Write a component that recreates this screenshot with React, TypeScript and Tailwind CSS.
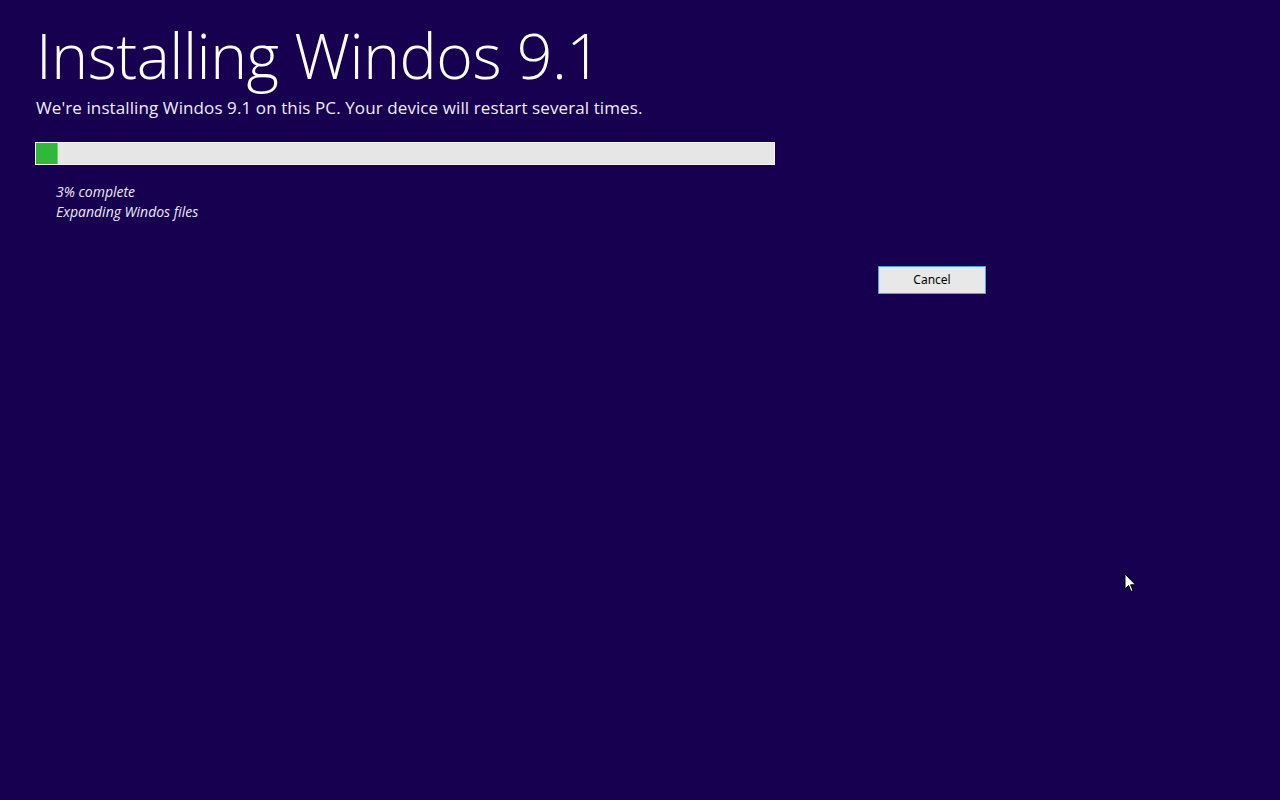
export default function App() {
  return (
    <div className="relative w-[1280px] h-[800px] overflow-hidden bg-[#180050] text-white" style={{ fontFamily: '"Open Sans", "Noto Sans", sans-serif' }}>
      <div className="pl-[36px] pt-[20px]">
        <h1 className="text-[62.5px] font-light leading-[70px] tracking-[-0.5px]">Installing Windos 9.1</h1>
        <p className="text-[17px] leading-[24px] mt-[6px] tracking-[0.1px] text-[#f0eef8]">We're installing Windos 9.1 on this PC. Your device will restart several times.</p>
        <div className="mt-[22px] w-[740px] h-[23px] ml-[-1px] bg-[#e6e6e6] border border-[#f4f4f4] flex">
          <div className="w-[22px] h-full bg-[#2fb83a] border-r border-[#6fd46e]" />
        </div>
        <div className="mt-[17px] pl-[20px] italic text-[14px] leading-[20px] text-[#ecebf5]">
          <div>3% complete</div>
          <div>Expanding Windos files</div>
        </div>
        <div className="mt-[44px] pl-[842px]">
          <button className="w-[108px] h-[28px] bg-[#e8e8e8] border border-[#4aa4f0] text-black text-[12px] leading-none" style={{ fontFamily: '"Noto Sans", sans-serif' }}>
            Cancel
          </button>
        </div>
      </div>
      <svg className="absolute left-[1124px] top-[573px]" width="14" height="20" viewBox="0 0 14 20">
        <path d="M1 1 L1 16 L4.5 12.5 L7 18.5 L9 17.6 L6.6 11.8 L11.5 11.8 Z" fill="#ffffff" stroke="#000000" strokeWidth="1" />
      </svg>
    </div>
  );
}
